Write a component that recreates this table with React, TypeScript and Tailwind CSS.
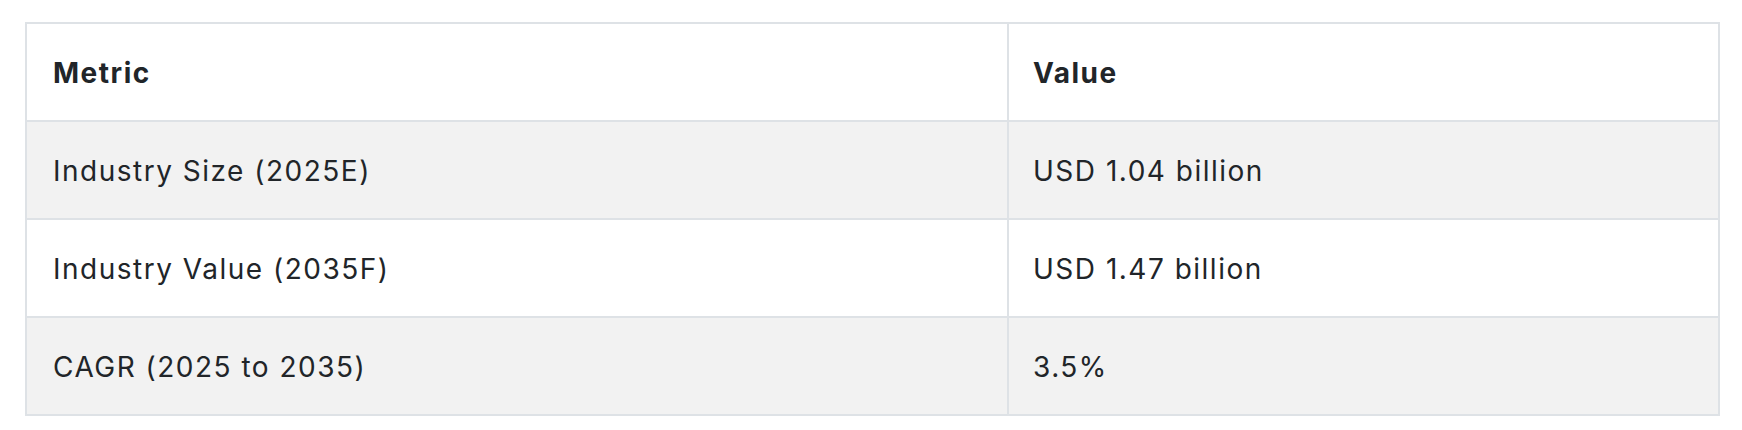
import React from 'react';

const rows = [
    { metric: 'Industry Size (2025E)', value: 'USD 1.04 billion' },
    { metric: 'Industry Value (2035F)', value: 'USD 1.47 billion' },
    { metric: 'CAGR (2025 to 2035)', value: '3.5%' },
];

export default function App() {
    return (
        <div
            className="bg-white pl-[25px] pr-[22px] pt-[22px] text-[#212529]"
            style={{ fontFamily: 'Inter, "Noto Sans", sans-serif' }}
        >
            <table className="w-full border-collapse border-2 border-[#dee2e6] text-[28px] tracking-[1.5px]">
                <thead>
                    <tr className="h-[98px] bg-white">
                        <th className="w-[982px] border-2 border-[#dee2e6] px-[26px] pt-[2px] text-left font-bold">
                            Metric
                        </th>
                        <th className="border-2 border-[#dee2e6] px-[24px] pt-[2px] text-left font-bold">
                            Value
                        </th>
                    </tr>
                </thead>
                <tbody>
                    {rows.map((row, index) => (
                        <tr
                            key={row.metric}
                            className={index % 2 === 0 ? 'h-[98px] bg-[#f2f2f2]' : 'h-[98px] bg-white'}
                        >
                            <td className="border-2 border-[#dee2e6] px-[26px] pt-[2px]">{row.metric}</td>
                            <td className="border-2 border-[#dee2e6] px-[24px] pt-[2px]">{row.value}</td>
                        </tr>
                    ))}
                </tbody>
            </table>
        </div>
    );
}
